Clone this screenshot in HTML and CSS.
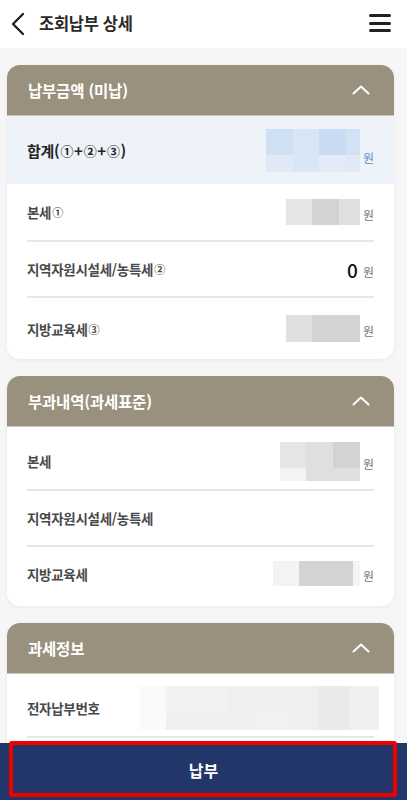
FILE: index.html
```html
<!DOCTYPE html>
<html lang="ko">
<head>
    <meta charset="UTF-8">
    <meta name="viewport" content="width=device-width, initial-scale=1.0">
    <title>조회납부 상세</title>
    <link rel="stylesheet" href="styles.css">
</head>
<body>
    <!-- 상단 헤더 -->
    <header class="top-bar">
        <button class="icon-btn back-btn" aria-label="뒤로">
            <svg width="16" height="24" viewBox="0 0 16 24"><path d="M13 2 L3 12 L13 22" fill="none" stroke="#222" stroke-width="2.4" stroke-linecap="round" stroke-linejoin="round"/></svg>
        </button>
        <h1 class="page-title">조회납부 상세</h1>
        <button class="icon-btn menu-btn" aria-label="메뉴">
            <span></span><span></span><span></span>
        </button>
    </header>

    <main class="content">
        <!-- 납부금액 -->
        <section class="card">
            <div class="card-head">
                <h2>납부금액 (미납)</h2>
                <svg class="fold" width="18" height="10" viewBox="0 0 18 10"><path d="M1.5 8.5 L9 1.5 L16.5 8.5" fill="none" stroke="#fff" stroke-width="2" stroke-linecap="round" stroke-linejoin="round"/></svg>
            </div>
            <div class="row total">
                <span class="label">합계(<span class="circ">①</span>+<span class="circ">②</span>+<span class="circ">③</span>)</span>
                <span class="value">
                    <span class="mosaic blue m-total">
                        <i class="c1"></i><i class="c2"></i><i class="c3"></i><i class="c4"></i>
                        <i class="c5"></i><i class="c6"></i><i class="c7"></i><i class="c8"></i>
                    </span>
                    <span class="unit">원</span>
                </span>
            </div>
            <div class="rows">
                <div class="row">
                    <span class="label">본세<span class="circ">①</span></span>
                    <span class="value">
                        <span class="mosaic gray m-a"><i class="c1"></i><i class="c3"></i><i class="c2"></i></span>
                        <span class="unit">원</span>
                    </span>
                </div>
                <div class="row">
                    <span class="label">지역자원시설세/농특세<span class="circ">②</span></span>
                    <span class="value"><span class="num">0</span><span class="unit">원</span></span>
                </div>
                <div class="row">
                    <span class="label">지방교육세<span class="circ">③</span></span>
                    <span class="value">
                        <span class="mosaic gray m-b"><i class="c2"></i><i class="c3"></i><i class="c3"></i></span>
                        <span class="unit">원</span>
                    </span>
                </div>
            </div>
        </section>

        <!-- 부과내역 -->
        <section class="card">
            <div class="card-head">
                <h2>부과내역(과세표준)</h2>
                <svg class="fold" width="18" height="10" viewBox="0 0 18 10"><path d="M1.5 8.5 L9 1.5 L16.5 8.5" fill="none" stroke="#fff" stroke-width="2" stroke-linecap="round" stroke-linejoin="round"/></svg>
            </div>
            <div class="rows padded">
                <div class="row">
                    <span class="label">본세</span>
                    <span class="value">
                        <span class="mosaic gray m-c">
                            <i class="c1"></i><i class="c2"></i><i class="c3"></i>
                            <i class="c0"></i><i class="c2"></i><i class="c2"></i>
                        </span>
                        <span class="unit">원</span>
                    </span>
                </div>
                <div class="row">
                    <span class="label">지역자원시설세/농특세</span>
                    <span class="value"></span>
                </div>
                <div class="row">
                    <span class="label">지방교육세</span>
                    <span class="value">
                        <span class="mosaic gray m-d"><i class="c0"></i><i class="c3"></i><i class="c3"></i><i class="c0"></i></span>
                        <span class="unit">원</span>
                    </span>
                </div>
            </div>
        </section>

        <!-- 과세정보 -->
        <section class="card">
            <div class="card-head">
                <h2>과세정보</h2>
                <svg class="fold" width="18" height="10" viewBox="0 0 18 10"><path d="M1.5 8.5 L9 1.5 L16.5 8.5" fill="none" stroke="#fff" stroke-width="2" stroke-linecap="round" stroke-linejoin="round"/></svg>
            </div>
            <div class="rows padded">
                <div class="row">
                    <span class="label">전자납부번호</span>
                    <span class="value">
                        <span class="mosaic light m-e">
                            <i class="c0"></i><i class="c1"></i><i class="c1"></i><i class="c2"></i><i class="c2"></i><i class="c2"></i><i class="c3"></i><i class="c2"></i>
                            <i class="c0"></i><i class="c2"></i><i class="c2"></i><i class="c2"></i><i class="c1"></i><i class="c2"></i><i class="c3"></i><i class="c2"></i>
                        </span>
                    </span>
                </div>
                <div class="row">
                    <span class="label">납부기한</span>
                    <span class="value"></span>
                </div>
            </div>
        </section>
    </main>

    <!-- 하단 납부 버튼 -->
    <footer class="pay-bar">
        <button class="pay-btn">납부</button>
        <div class="mark"></div>
    </footer>
</body>
</html>
```

FILE: styles.css
```css
:root {
    --head-color: #9a907e;
    --navy: #22366a;
    --text-color: #222;
    --label-color: #4a4a4a;
    --unit-color: #777;
    --line-color: #e6e6e6;
    --page-bg: #f6f6f6;
}

* {
    box-sizing: border-box;
}

body {
    margin: 0;
    font-family: 'Noto Sans CJK KR', 'Noto Sans', sans-serif;
    background-color: var(--page-bg);
    color: var(--text-color);
}

.top-bar {
    height: 48px;
    background-color: white;
    display: flex;
    align-items: center;
    padding: 0 16px 0 10px;
}

.icon-btn {
    background: none;
    border: none;
    padding: 0;
    cursor: pointer;
}

.back-btn {
    width: 20px;
    height: 24px;
    display: flex;
    align-items: center;
    margin-top: -1px;
}

.page-title {
    flex: 1;
    margin: 0 0 0 9px;
    font-size: 16.5px;
    font-weight: 700;
    letter-spacing: -0.3px;
    color: #2a2a2a;
    margin-top: -2px;
}

.menu-btn {
    width: 22px;
    height: 18px;
    display: flex;
    flex-direction: column;
    justify-content: space-between;
    margin-top: -2px;
}

.menu-btn span {
    display: block;
    height: 3px;
    border-radius: 1.5px;
    background-color: #222;
}

.content {
    padding: 17px 13px 80px 7px;
    display: flex;
    flex-direction: column;
    gap: 17px;
}

.card {
    background-color: white;
    border-radius: 13px;
    overflow: hidden;
    box-shadow: 0 1px 4px rgba(0,0,0,0.06);
}

.card-head {
    height: 51px;
    background-color: var(--head-color);
    display: flex;
    align-items: center;
    justify-content: space-between;
    padding: 0 24px 0 21px;
    border-bottom: 1px solid #cfc8bb;
}

.card-head h2 {
    margin: 0;
    font-size: 15.5px;
    font-weight: 700;
    color: white;
    letter-spacing: -0.2px;
}

.fold {
    display: block;
}

.rows {
    padding: 0 20px;
}

.rows.padded {
    padding-top: 6px;
    padding-bottom: 6px;
}

.row {
    display: flex;
    align-items: center;
    justify-content: space-between;
    height: 56px;
}

.rows .row + .row {
    border-top: 2px solid var(--line-color);
}

.rows .row:last-child {
    height: 63px;
}

.rows.padded .row:last-child {
    height: 55px;
}

.row.total {
    height: 68px;
    background-color: #eef3f9;
    padding: 0 20px;
}

.label {
    font-size: 13.5px;
    font-weight: 700;
    color: var(--label-color);
    letter-spacing: -0.3px;
}

.total .label {
    font-size: 15px;
    color: #262626;
}

.circ {
    font-size: 11px;
    font-weight: 700;
    margin: 0 1px;
    position: relative;
    top: -1px;
}

.total .circ {
    font-size: 13px;
}

.value {
    display: flex;
    align-items: center;
    gap: 3px;
}

.unit {
    font-size: 12px;
    color: var(--unit-color);
    margin-top: 4px;
}

.total .unit {
    color: #5a8ed0;
    margin-top: 14px;
}

.num {
    font-size: 19px;
    font-weight: 500;
    color: #111;
    margin-right: 2px;
}

/* 가려진 금액 */
.mosaic {
    display: grid;
}

.mosaic i {
    display: block;
}

.m-total {
    width: 94px;
    height: 43px;
    grid-template-columns: 27px 26px 27px 14px;
    grid-template-rows: 26px 17px;
}

.mosaic.blue .c1 { background-color: #cfe0f4; }
.mosaic.blue .c2 { background-color: #d7e5f6; }
.mosaic.blue .c3 { background-color: #c8dbf2; }
.mosaic.blue .c4 { background-color: #d2e2f4; }
.mosaic.blue .c5 { background-color: #e0eaf7; }
.mosaic.blue .c6 { background-color: #dbe6f5; }
.mosaic.blue .c7 { background-color: #e2ebf7; }
.mosaic.blue .c8 { background-color: #e0eaf6; }

.mosaic.gray .c0 { background-color: #f3f3f3; }
.mosaic.gray .c1 { background-color: #e5e5e5; }
.mosaic.gray .c2 { background-color: #dfdfdf; }
.mosaic.gray .c3 { background-color: #d3d3d3; }

.mosaic.light .c0 { background-color: #fafafa; }
.mosaic.light .c1 { background-color: #f2f2f2; }
.mosaic.light .c2 { background-color: #efefef; }
.mosaic.light .c3 { background-color: #eaeaea; }

.m-a {
    width: 74px;
    height: 26px;
    grid-template-columns: 26px 27px 21px;
}

.m-b {
    width: 74px;
    height: 27px;
    grid-template-columns: 26px 27px 21px;
}

.m-c {
    width: 80px;
    height: 39px;
    grid-template-columns: 26px 27px 27px;
    grid-template-rows: 26px 13px;
}

.m-d {
    width: 87px;
    height: 25px;
    grid-template-columns: 26px 27px 27px 7px;
}

.m-e {
    width: 239px;
    height: 44px;
    grid-template-columns: 26px repeat(7, 1fr);
    grid-template-rows: 27px 17px;
    margin-right: -5px;
}

/* 하단 버튼 */
.pay-bar {
    position: fixed;
    left: 0;
    right: 0;
    bottom: 0;
    height: 57px;
    background-color: var(--navy);
}

.pay-btn {
    width: 100%;
    height: 100%;
    background: none;
    border: none;
    color: white;
    font-family: inherit;
    font-size: 16px;
    font-weight: 700;
    padding-bottom: 4px;
    cursor: pointer;
}

.mark {
    position: absolute;
    left: 9px;
    right: 10px;
    top: -2px;
    bottom: 3px;
    border: 4px solid #f20000;
    border-radius: 3px;
    pointer-events: none;
}
```
